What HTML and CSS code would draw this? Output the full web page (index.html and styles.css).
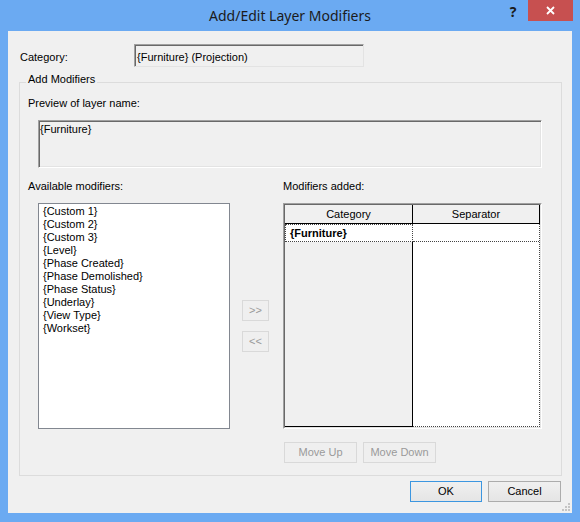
FILE: index.html
```html
<!DOCTYPE html>
<html>
<head>
<meta charset="utf-8">
<title>Add/Edit Layer Modifiers</title>
<link rel="stylesheet" href="styles.css">
</head>
<body>
<div class="window">
  <div class="titlebar">
    <div class="title">Add/Edit Layer Modifiers</div>
    <div class="caption">
      <div class="help">?</div>
      <div class="close">
        <svg width="9" height="9" viewBox="0 0 9 9"><path d="M1 1 L8 8 M8 1 L1 8" stroke="#fff" stroke-width="1.8" fill="none"/></svg>
      </div>
    </div>
  </div>
  <div class="client">
    <div class="cat-row">
      <span class="cat-label">Category:</span>
      <div class="textbox">{Furniture} (Projection)</div>
    </div>
    <fieldset class="group">
      <legend>Add Modifiers</legend>
      <div class="preview-label">Preview of layer name:</div>
      <div class="preview">{Furniture}</div>
      <div class="columns">
        <div class="col-left">
          <div class="col-label">Available modifiers:</div>
          <div class="listbox">
            <div>{Custom 1}</div>
            <div>{Custom 2}</div>
            <div>{Custom 3}</div>
            <div>{Level}</div>
            <div>{Phase Created}</div>
            <div>{Phase Demolished}</div>
            <div>{Phase Status}</div>
            <div>{Underlay}</div>
            <div>{View Type}</div>
            <div>{Workset}</div>
          </div>
        </div>
        <div class="col-mid">
          <div class="btn disabled small">&gt;&gt;</div>
          <div class="btn disabled small">&lt;&lt;</div>
        </div>
        <div class="col-right">
          <div class="col-label">Modifiers added:</div>
          <div class="grid">
            <div class="grid-inner">
              <div class="grid-head">
                <div class="hcell">Category</div>
                <div class="hcell">Separator</div>
              </div>
              <div class="grid-body">
                <div class="gcol cat">
                  <div class="gcell focus">{Furniture}</div>
                </div>
                <div class="gcol sep">
                  <div class="gcell sepcell"></div>
                </div>
              </div>
            </div>
          </div>
          <div class="move-row">
            <div class="btn disabled wide">Move Up</div>
            <div class="btn disabled wide">Move Down</div>
          </div>
        </div>
      </div>
    </fieldset>
    <div class="footer">
      <div class="btn default ok">OK</div>
      <div class="btn wide">Cancel</div>
    </div>
    <svg class="grip" width="9" height="9" viewBox="0 0 9 9">
      <rect x="6" y="0" width="2" height="2" fill="#c4c4c4"/>
      <rect x="3" y="3" width="2" height="2" fill="#c4c4c4"/>
      <rect x="6" y="3" width="2" height="2" fill="#c4c4c4"/>
      <rect x="0" y="6" width="2" height="2" fill="#c4c4c4"/>
      <rect x="3" y="6" width="2" height="2" fill="#c4c4c4"/>
      <rect x="6" y="6" width="2" height="2" fill="#c4c4c4"/>
    </svg>
  </div>
</div>
</body>
</html>
```

FILE: styles.css
```css
* { box-sizing: border-box; }

body {
  margin: 0;
  font-family: "Liberation Sans", Arial, sans-serif;
  font-size: 11px;
  line-height: 13px;
  color: #000;
}

.window {
  width: 580px;
  height: 522px;
  background: #6baaf2;
  display: flex;
  flex-direction: column;
}

.titlebar {
  height: 31px;
  flex: none;
  position: relative;
}

.title {
  font-family: "Noto Sans", "Open Sans", sans-serif;
  font-size: 14px;
  line-height: 31px;
  text-align: center;
  color: #1b1b1b;
}

.caption {
  position: absolute;
  top: 0;
  right: 7px;
  display: flex;
}

.help {
  width: 30px;
  height: 21px;
  font-family: "Noto Sans", sans-serif;
  font-weight: bold;
  font-size: 14px;
  line-height: 23px;
  text-align: center;
  color: #1a1a1a;
}

.close {
  width: 45px;
  height: 21px;
  background: #c75050;
  display: flex;
  align-items: center;
  justify-content: center;
}

.client {
  margin: 0 8px;
  height: 482px;
  flex: none;
  background: #f0f0f0;
  padding: 13px 10px 0 11px;
  position: relative;
}

.cat-row {
  display: flex;
  height: 23px;
  padding-left: 1px;
}

.cat-label {
  width: 114px;
  padding-top: 7px;
}

.textbox {
  width: 230px;
  height: 23px;
  border: 1px solid;
  border-color: #a0a0a0 #e3e3e3 #e3e3e3 #a0a0a0;
  box-shadow: inset 1px 1px 0 #696969;
  padding: 6px 2px 0 2px;
  white-space: nowrap;
}

.group {
  margin: 6px 0 0 0;
  padding: 0 0 12px 8px;
  border: 1px solid #dcdcdc;
  min-width: 0;
}

.group legend {
  padding: 0 2px 5px 2px;
  margin-left: -2px;
  line-height: 13px;
}

.preview-label {
  margin-top: 6px;
}

.preview {
  margin: 10px 0 0 10px;
  width: 504px;
  height: 48px;
  border: 1px solid;
  border-color: #a0a0a0 #ffffff #ffffff #a0a0a0;
  box-shadow: inset 1px 1px 0 #696969, inset -1px -1px 0 #e3e3e3;
  padding: 2px 1px 0 1px;
}

.columns {
  display: flex;
  align-items: flex-start;
  margin-top: 12px;
}

.listbox {
  margin: 10px 0 0 10px;
  width: 192px;
  height: 226px;
  background: #fff;
  border: 1px solid #828790;
  padding: 1px 0 0 4px;
}

.col-mid {
  margin: 120px 0 0 12px;
  display: flex;
  flex-direction: column;
  gap: 10px;
}

.col-right {
  margin-left: 14px;
}

.btn {
  height: 21px;
  display: flex;
  align-items: center;
  justify-content: center;
  border: 1px solid #acacac;
  background: linear-gradient(#f0f0f0, #e5e5e5);
  white-space: nowrap;
}

.btn.small { width: 27px; }
.btn.wide { width: 73px; }
.btn.ok { width: 72px; }

.btn.disabled {
  border-color: #d9d9d9;
  background: #efefef;
  color: #9a9a9a;
}

.btn.default {
  border-color: #3c96e0;
}

.grid {
  margin-top: 10px;
  width: 259px;
  height: 226px;
  border: 1px solid;
  border-color: #a0a0a0 #ffffff #ffffff #a0a0a0;
}

.grid-inner {
  height: 100%;
  border: 1px solid;
  border-color: #696969 #e3e3e3 #e3e3e3 #696969;
  display: flex;
  flex-direction: column;
}

.grid-head {
  display: flex;
  height: 19px;
  flex: none;
}

.hcell {
  width: 128px;
  border-right: 1px solid #000;
  border-bottom: 1px solid #000;
  text-align: center;
  line-height: 18px;
}

.hcell + .hcell { width: 127px; }

.grid-body {
  display: flex;
  flex: 1;
}

.gcol {
  height: 100%;
}

.gcol.cat {
  width: 128px;
  background: #f0f0f0;
  border-right: 1px solid #000;
  border-bottom: 1px solid #000;
}

.gcol.sep {
  width: 127px;
  background: #fff;
  border-right: 1px dotted #444;
  border-bottom: 1px dotted #444;
}

.gcell {
  height: 18px;
  background: #fff;
  border-bottom: 1px dotted #444;
  line-height: 17px;
}

.gcell.focus {
  font-weight: bold;
  border: 1px dotted #444;
  padding-left: 4px;
  margin-right: -1px;
  line-height: 16px;
}

.move-row {
  display: flex;
  gap: 6px;
  margin: 13px 0 0 1px;
}

.footer {
  display: flex;
  justify-content: flex-end;
  gap: 6px;
  margin-top: 5px;
  padding-right: 1px;
}

.grip {
  position: absolute;
  right: 1px;
  bottom: 1px;
}
```
